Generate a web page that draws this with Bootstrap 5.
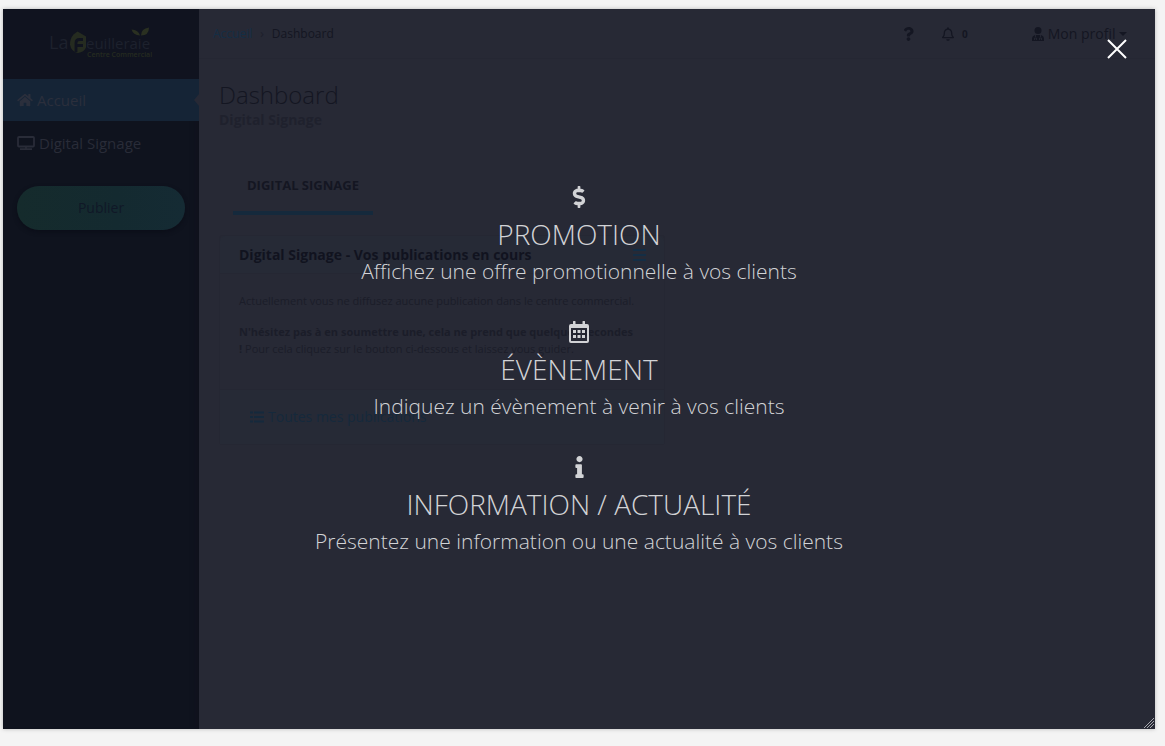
<!DOCTYPE html>
<html lang="fr">
<head>
<meta charset="utf-8">
<meta name="viewport" content="width=device-width, initial-scale=1">
<title>Dashboard - Digital Signage</title>
<link href="https://cdn.jsdelivr.net/npm/bootstrap@5.3.0/dist/css/bootstrap.min.css" rel="stylesheet">
<style>
  :root { --ink: #141622; --blue: #142e45; --panel: #272935; --night: #0f131e; }
  body { background: #f4f4f4; font-family: "Open Sans", sans-serif; font-size: 14px; line-height: 20px; color: var(--ink); padding: 9px 10px 17px 3px; }
  a { text-decoration: none; color: inherit; }
  .app-frame { min-height: calc(100vh - 26px); background: var(--panel); box-shadow: 0 0 4px rgba(0,0,0,.25); }
  .side { width: 196px; flex: none; background: var(--night); box-shadow: inset -8px 0 6px -6px #10111c; }
  .brand-box { height: 70px; background: #10131f; }
  .side-link { height: 42px; padding: 0 14px; color: #292c38; gap: 4px; font-size: 15px; }
  .side-link.current { background: #152436; margin-bottom: 1px; color: #2b2f3c; }
  .side-link.current::after { content: ""; position: absolute; right: 0; top: 15px; border: 6px solid transparent; border-left: 0; border-right: 5px solid var(--panel); }
  .publish { margin: 22px 14px; height: 44px; border: 0; color: #101827; border-radius: 22px; background: linear-gradient(90deg, #152b2c, #142a30 60%, #152b34); box-shadow: 0 2px 4px #0b0e18; }
  .topbar { height: 50px; padding: 0 28px 0 14px; border-bottom: 1px solid #252733; font-size: 12px; }
  .plain { background: none; border: 0; padding: 0; color: inherit; line-height: 20px; }
  .crumb-link { color: var(--blue); }
  .count { font-size: 10px; font-weight: 700; }
  .profile { font-size: 14px; margin-left: 64px; }
  .work { padding: 20px; }
  .work h1 { font-size: 24px; font-weight: 300; line-height: 32px; margin: 0; }
  .work h2 { font-size: 14px; font-weight: 700; line-height: 18px; margin: 0; color: #1f212d; }
  .tab-row { margin: 30px 14px 20px; }
  .tab-on { font-size: 13px; font-weight: 700; padding: 16px 14px; border-bottom: 4px solid #15293c; }
  .pub-card { width: 446px; max-width: 100%; border: 1px solid #252733; border-radius: 3px; background: var(--panel); color: inherit; }
  .pub-head, .pub-foot { background: #262a36; border-color: #252733; padding: 0 18px 0 19px; }
  .pub-head { height: 38px; font-weight: 700; color: #11131f; }
  .pub-body { padding: 18px 28px 18px 19px; font-size: 11px; line-height: 17px; min-height: 115px; color: #1b1d29; }
  .pub-body p { margin-bottom: 14px; }
  .pub-foot { height: 55px; padding: 0 30px; color: #15293c; border-top: 1px solid #252733; }
  .chooser { position: absolute; inset: 0; padding-top: 174px; gap: 31px; color: #d2d3d6; text-align: center; }
  .choice { width: 100%; font-weight: 300; font-size: 21px; line-height: 32px; }
  .choice svg { display: block; margin: 0 auto 4px; height: 28px; padding: 3px 0; }
  .choice strong { display: block; font-weight: 300; font-size: 28px; line-height: 38px; margin-bottom: 2px; text-transform: uppercase; }
  .shut { position: absolute; top: 30px; right: 28px; }
  .grip { position: absolute; right: 0; bottom: 0; }
</style>
</head>
<body>
<div class="app-frame position-relative d-flex">
  <nav class="side d-flex flex-column" aria-label="Menu">
    <a href="#" class="brand-box d-flex align-items-center justify-content-center" aria-label="La Feuilleraie">
      <svg width="108" height="34" viewBox="-2 0 108 34" font-family="Open Sans, sans-serif">
        <text x="0" y="22" font-size="18" fill="#1d212d">La</text>
        <path d="M28.500 4.500l8.500 5v11q-2 4.500-8 5.500-7-1.500-8-8.500 0-6 3.500-10z" fill="#252b20"/>
        <path d="M27 25v-9q0-3.500 3.500-3.500H34M28 18.500h6" fill="none" stroke="#10131f" stroke-width="2.800"/>
        <text x="37" y="22" font-size="15" fill="#1d212d">euilleraie</text>
        <path d="M91 8.500q-7-.5-8.500-6 7 .5 8.500 6zm1 0q0-7 8-8 0 8-8 8z" fill="#2a3021"/>
        <text x="38" y="30" font-size="7" font-weight="600" fill="#252b20">Centre Commercial</text>
      </svg>
    </a>
    <a href="#" class="side-link current position-relative d-flex align-items-center">
      <svg width="16" height="14" viewBox="0 0 576 512" fill="currentColor"><path d="M280.37 148.26L96 300.11V464a16 16 0 0 0 16 16l112.06-.29a16 16 0 0 0 15.92-16V368a16 16 0 0 1 16-16h64a16 16 0 0 1 16 16v95.64a16 16 0 0 0 16 16.05L464 480a16 16 0 0 0 16-16V300L295.67 148.26a12.19 12.19 0 0 0-15.3 0zM571.6 251.47L488 182.56V44.05a12 12 0 0 0-12-12h-56a12 12 0 0 0-12 12v72.61L318.47 43a48 48 0 0 0-61 0L4.34 251.47a12 12 0 0 0-1.6 16.9l25.5 31A12 12 0 0 0 45.15 301l235.22-193.74a12.19 12.19 0 0 1 15.3 0L530.9 301a12 12 0 0 0 16.9-1.6l25.5-31a12 12 0 0 0-1.7-16.93z"/></svg>
      <span>Accueil</span>
    </a>
    <a href="#" class="side-link d-flex align-items-center">
      <svg width="18" height="14" viewBox="0 0 18 14"><rect x="1" y="1" width="16" height="9.500" rx="1" fill="none" stroke="currentColor" stroke-width="1.800"/><path d="M3 13.200h12M9 11v2" stroke="currentColor" stroke-width="1.800"/></svg>
      <span>Digital Signage</span>
    </a>
    <button type="button" class="publish">Publier</button>
  </nav>

  <main class="flex-grow-1">
    <header class="topbar d-flex align-items-center">
      <div class="d-flex gap-2"><a href="#" class="crumb-link">Accueil</a><span class="opacity-50">›</span><span>Dashboard</span></div>
      <button type="button" class="plain ms-auto me-4 d-flex" aria-label="Aide"><svg width="11" height="14" viewBox="0 0 384 512" fill="currentColor"><path d="M202.021 0C122.202 0 70.503 32.703 29.914 91.026c-7.363 10.58-5.093 25.086 5.178 32.874l43.138 32.709c10.373 7.865 25.132 6.026 33.253-4.148 25.049-31.381 43.63-49.449 82.757-49.449 30.764 0 68.816 19.799 68.816 49.631 0 22.552-18.617 34.134-48.993 51.164-35.423 19.86-82.299 44.576-82.299 106.405V320c0 13.255 10.745 24 24 24h72.471c13.255 0 24-10.745 24-24v-5.773c0-42.86 125.268-44.645 125.268-160.627C377.504 66.256 286.902 0 202.021 0zM192 373.459c-38.196 0-69.271 31.075-69.271 69.271 0 38.195 31.075 69.27 69.271 69.27s69.271-31.075 69.271-69.271-31.075-69.27-69.271-69.27z"/></svg></button>
      <button type="button" class="plain ms-1 d-flex align-items-center gap-2" aria-label="Notifications"><svg width="12" height="14" viewBox="0 0 448 512" fill="currentColor"><path d="M439.39 362.29c-19.32-20.76-55.47-51.99-55.47-154.29 0-77.7-54.48-139.9-127.94-155.16V32c0-17.67-14.32-32-31.98-32s-31.98 14.33-31.98 32v20.84C118.56 68.1 64.08 130.3 64.08 208c0 102.3-36.15 133.53-55.47 154.29-6 6.45-8.66 14.16-8.61 21.71.11 16.4 12.98 32 32.1 32h383.8c19.12 0 32-15.6 32.1-32 .05-7.55-2.61-15.27-8.61-21.71zM67.53 368c21.22-27.97 44.42-74.33 44.53-159.42 0-.2-.06-.38-.06-.58 0-61.86 50.14-112 112-112s112 50.14 112 112c0 .2-.06.38-.06.58.11 85.1 23.31 131.46 44.53 159.42H67.53zM224 512c35.32 0 63.97-28.65 63.97-64H160.03c0 35.35 28.65 64 63.97 64z"/></svg><span class="count">0</span></button>
      <button type="button" class="plain profile dropdown-toggle d-flex align-items-center"><svg class="me-1" width="12" height="14" viewBox="0 0 12 14"><circle cx="6" cy="3.500" r="3.500" fill="currentColor"/><path d="M3 8h6q3 1 3 4v2H0v-2q0-3 3-4z" fill="currentColor"/><path d="M3.500 8v2M8.500 8v2M2.500 13v-2h2v2M7.500 13v-2h2v2" fill="none" stroke="#272935" stroke-width=".8"/></svg>Mon profil</button>
    </header>

    <div class="work">
      <h1>Dashboard</h1>
      <h2>Digital Signage</h2>
      <div class="tab-row d-flex"><a href="#" class="tab-on">DIGITAL SIGNAGE</a></div>
      <section class="card pub-card">
        <div class="card-header pub-head d-flex align-items-center justify-content-between"><span>Digital Signage - Vos publications en cours</span>
          <button type="button" class="plain crumb-link d-flex" aria-label="Liste"><svg width="13" height="12" viewBox="0 0 13 12"><path d="M0 1h13M0 6h13M0 11h13" stroke="currentColor" stroke-width="2"/></svg></button></div>
        <div class="pub-body">
          <p>Actuellement vous ne diffusez aucune publication dans le centre commercial.</p>
          <p><b>N'hésitez pas à en soumettre une, cela ne prend que quelques secondes !</b> Pour cela cliquez sur le bouton ci-dessous et laissez vous guider.</p>
        </div>
        <div class="pub-foot d-flex align-items-center">
          <a href="#" class="d-flex align-items-center gap-1"><svg width="14" height="12" viewBox="0 0 14 12"><path d="M0 1.500h3M0 6h3M0 10.500h3M4 1.500h10M4 6h10M4 10.500h10" stroke="currentColor" stroke-width="2"/></svg>Toutes mes publications</a>
        </div>
      </section>
    </div>
  </main>

  <div class="chooser d-flex flex-column align-items-center" role="dialog" aria-label="Type de publication">
    <a href="#" class="choice">
      <svg width="14" viewBox="0 0 288 512" fill="currentColor"><path d="M209.2 233.4l-108-31.6C88.700 198.200 80 186.500 80 173.500c0-16.300 13.200-29.500 29.500-29.500h66.300c12.200 0 24.200 3.700 34.200 10.500 6.100 4.100 14.300 3.100 19.500-2l34.800-34c7.100-6.900 6.100-18.400-1.800-24.500C238 74.800 207.400 64.100 176 64V16c0-8.800-7.200-16-16-16h-32c-8.800 0-16 7.200-16 16v48h-2.500C45.800 64-5.400 118.700.5 183.600c4.200 46.100 39.400 83.600 83.800 96.600l102.500 30c12.500 3.700 21.200 15.300 21.200 28.300 0 16.300-13.200 29.500-29.500 29.500h-66.300C100 368 88 364.300 78 357.500c-6.100-4.100-14.300-3.100-19.500 2l-34.800 34c-7.100 6.900-6.100 18.400 1.800 24.500 24.500 19.200 55.100 29.900 86.500 30v48c0 8.800 7.200 16 16 16h32c8.800 0 16-7.200 16-16v-48.200c46.600-.9 90.300-28.600 105.700-72.700 21.500-61.600-14.600-124.800-72.500-141.700z"/></svg>
      <strong>Promotion</strong>Affichez une offre promotionnelle à vos clients
    </a>
    <a href="#" class="choice">
      <svg width="20" viewBox="0 0 20 22"><path fill="currentColor" fill-rule="evenodd" d="M4 .5q0-.5.500-.5h1.500q.5 0 .5.500V3h7V.5q0-.5.500-.5h1.500q.5 0 .5.500V3h2q2 0 2 2v15q0 2-2 2H2q-2 0-2-2V5q0-2 2-2h2zM2 7v12.500q0 .5.500.5h15q.5 0 .5-.500V7z"/><path fill="currentColor" d="M4 9h3v3H4zM8.500 9h3v3h-3zM13 9h3v3h-3zM4 14h3v3H4zM8.500 14h3v3h-3zM13 14h3v3h-3z"/></svg>
      <strong>Évènement</strong>Indiquez un évènement à venir à vos clients
    </a>
    <a href="#" class="choice">
      <svg width="9" viewBox="0 0 192 512" fill="currentColor"><path d="M20 424.229h20V279.771H20c-11.046 0-20-8.954-20-20V212c0-11.046 8.954-20 20-20h112c11.046 0 20 8.954 20 20v212.229h20c11.046 0 20 8.954 20 20V492c0 11.046-8.954 20-20 20H20c-11.046 0-20-8.954-20-20v-47.771c0-11.046 8.954-20 20-20zM96 0C56.235 0 24 32.235 24 72s32.235 72 72 72 72-32.235 72-72S135.764 0 96 0z"/></svg>
      <strong>Information / Actualité</strong>Présentez une information ou une actualité à vos clients
    </a>
    <button type="button" class="plain shut d-flex" aria-label="Fermer"><svg width="20" height="20" viewBox="0 0 20 20"><path d="M1 1l18 18M19 1L1 19" stroke="#fff" stroke-width="2"/></svg></button>
    <svg class="grip" width="12" height="12" viewBox="0 0 12 12"><path d="M1 11L11 1M4 11l7-7M7 11l4-4" stroke="#a5a7ad"/></svg>
  </div>
</div>
<script src="https://cdn.jsdelivr.net/npm/bootstrap@5.3.0/dist/js/bootstrap.bundle.min.js"></script>
</body>
</html>
